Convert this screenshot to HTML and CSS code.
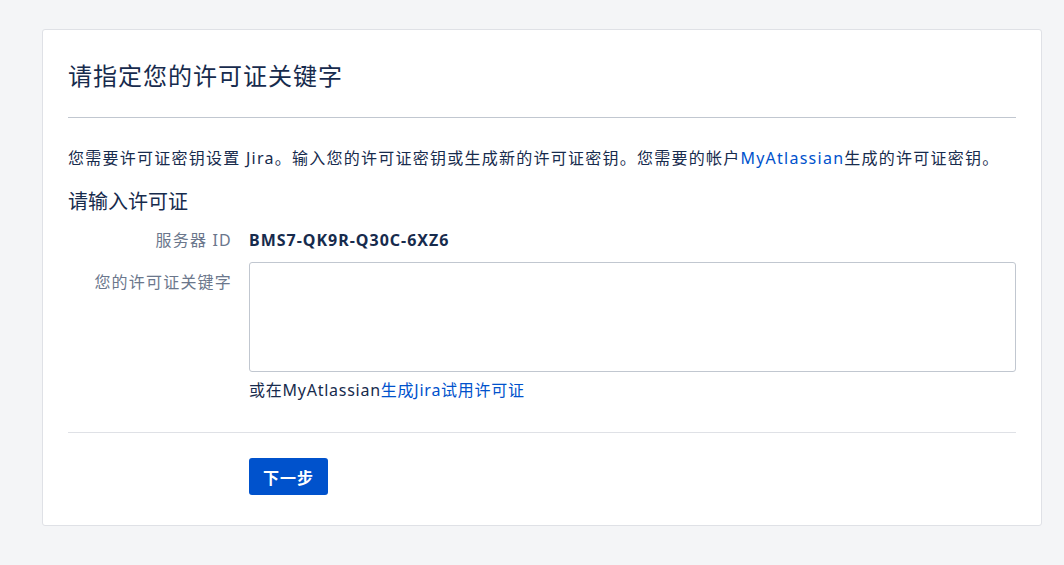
FILE: index.html
```html
<!DOCTYPE html>
<html lang="zh-CN">
<head>
  <meta charset="UTF-8" />
  <title>请指定您的许可证关键字</title>
  <link rel="stylesheet" href="styles.css">
</head>
<body>

<div class="setup-page">
  <div class="setup-panel">
    <div class="panel-header">
      <h1 class="panel-title">请指定您的许可证关键字</h1>
    </div>

    <p class="intro">您需要许可证密钥设置 Jira。输入您的许可证密钥或生成新的许可证密钥。您需要的帐户<a href="#" class="link">MyAtlassian</a>生成的许可证密钥。</p>

    <h2 class="section-title">请输入许可证</h2>

    <div class="form-row">
      <div class="form-label">服务器 ID</div>
      <div class="form-value">BMS7-QK9R-Q30C-6XZ6</div>
    </div>

    <div class="form-row form-row-field">
      <label class="form-label label-top" for="licenseKey">您的许可证关键字</label>
      <div class="form-field">
        <textarea id="licenseKey" class="license-input"></textarea>
        <div class="help-text">或在MyAtlassian<a href="#" class="link">生成Jira试用许可证</a></div>
      </div>
    </div>

    <div class="form-actions">
      <div class="form-label"></div>
      <button type="button" class="btn-primary">下一步</button>
    </div>
  </div>
</div>

</body>
</html>
```

FILE: styles.css
```css
body {
  margin: 0;
  background-color: #f4f5f7;
  color: #172b4d;
  font-family: "Noto Sans", "Noto Sans CJK SC", sans-serif;
}

.setup-page {
  padding: 29px 22px 40px 42px;
}

.setup-panel {
  width: 948px;
  background-color: #fff;
  border: 1px solid #dfe1e6;
  border-radius: 3px;
  padding: 31px 25px 30px 25px;
}

.panel-header {
  border-bottom: 1px solid #c1c7d0;
  padding-bottom: 26px;
}

.panel-title {
  margin: 0;
  font-size: 24px;
  line-height: 30px;
  font-weight: 400;
  letter-spacing: 1px;
}

.intro {
  margin: 30px 0 0 0;
  font-size: 16px;
  line-height: 20px;
  letter-spacing: 1.25px;
}

.link {
  color: #0052cc;
  text-decoration: none;
}

.section-title {
  margin: 20px 0 0 0;
  font-size: 20px;
  line-height: 28px;
  font-weight: 400;
}

.form-row {
  display: flex;
  gap: 17px;
  margin-top: 12px;
}

.form-row-field {
  margin-top: 10px;
}

.form-label {
  width: 164px;
  flex-shrink: 0;
  text-align: right;
  color: #6b778c;
  font-size: 16px;
  line-height: 24px;
  letter-spacing: 1.2px;
}

.label-top {
  padding-top: 8px;
}

.form-value {
  font-size: 16px;
  line-height: 24px;
  font-weight: 700;
  letter-spacing: 1px;
}

.form-field {
  flex: 1;
}

.license-input {
  display: block;
  width: 100%;
  height: 110px;
  box-sizing: border-box;
  border: 1px solid #c1c7d0;
  border-radius: 3px;
  resize: none;
  margin: 0;
}

.help-text {
  margin-top: 6px;
  font-size: 16px;
  line-height: 24px;
  letter-spacing: 0.75px;
}

.form-actions {
  display: flex;
  gap: 17px;
  margin-top: 30px;
  padding-top: 25px;
  border-top: 1px solid #dfe1e6;
}

.btn-primary {
  height: 37px;
  padding: 0 14px;
  border: none;
  border-radius: 3px;
  background-color: #0052cc;
  color: #fff;
  font-family: inherit;
  font-size: 16px;
  font-weight: 700;
  letter-spacing: 1px;
  cursor: pointer;
}
```
